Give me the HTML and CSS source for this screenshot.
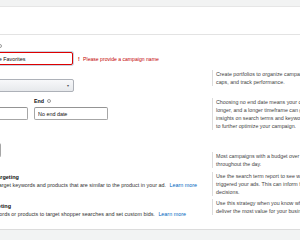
FILE: index.html
```html
<!DOCTYPE html>
<html lang="en">
<head>
    <meta charset="UTF-8">
    <title>Campaign settings</title>
    <link rel="stylesheet" href="styles.css">
</head>
<body>
    <div class="page">
        <div class="card">
            <div class="card-head">
                <h2>Settings</h2>
            </div>

            <div class="form">
                <!-- campaign name -->
                <div class="row row-name">
                    <div class="field">
                        <label class="label">Campaign name <span class="info"></span></label>
                        <div class="inline">
                            <input class="input input-error" type="text" value="Campaign - Home Favorites">
                            <span class="error"><b>!</b> Please provide a campaign name</span>
                        </div>
                    </div>
                </div>

                <!-- portfolio -->
                <div class="row row-portfolio">
                    <div class="field">
                        <label class="label">Portfolio <span class="info"></span></label>
                        <div class="select">No portfolio <span class="caret">&#9662;</span></div>
                    </div>
                    <div class="help">
                        Create portfolios to organize campaigns, set budget<br>
                        caps, and track performance.
                    </div>
                </div>

                <!-- dates -->
                <div class="row row-dates">
                    <div class="field dates">
                        <div class="date">
                            <label class="label">Start <span class="info"></span></label>
                            <input class="input input-date" type="text" value="Jun 4, 2024">
                        </div>
                        <div class="date">
                            <label class="label">End <span class="info"></span></label>
                            <input class="input input-date" type="text" value="No end date">
                        </div>
                    </div>
                    <div class="help">
                        Choosing no end date means your campaign can run<br>
                        longer, and a longer timeframe can give you more<br>
                        insights on search terms and keyword performance<br>
                        to further optimize your campaign.
                    </div>
                </div>

                <!-- budget -->
                <div class="row row-budget">
                    <div class="field">
                        <label class="label">Daily budget <span class="info"></span></label>
                        <input class="input input-budget" type="text" value="$">
                    </div>
                    <div class="help">
                        Most campaigns with a budget over $10 run<br>
                        throughout the day.
                    </div>
                </div>

                <!-- targeting -->
                <div class="row row-auto">
                    <div class="option">
                        <span class="radio"></span>
                        <div>
                            <div class="option-title">Automatic targeting</div>
                            <div class="option-text">Amazon will target keywords and products that are similar to the product in your ad. <a href="#">Learn more</a></div>
                        </div>
                    </div>
                    <div class="help">
                        Use the search term report to see which search terms<br>
                        triggered your ads. This can inform future bidding<br>
                        decisions.
                    </div>
                </div>

                <div class="row row-manual">
                    <div class="option">
                        <span class="radio"></span>
                        <div>
                            <div class="option-title">Manual targeting</div>
                            <div class="option-text">Choose keywords or products to target shopper searches and set custom bids. <a href="#">Learn more</a></div>
                        </div>
                    </div>
                    <div class="help">
                        Use this strategy when you know which keywords<br>
                        deliver the most value for your business.
                    </div>
                </div>
            </div>
        </div>
    </div>
</body>
</html>
```

FILE: styles.css
```css
* {
    margin: 0;
    padding: 0;
    box-sizing: border-box;
}

body {
    font-family: 'Liberation Sans', Arial, sans-serif;
    font-size: 5.3px;
    line-height: 8px;
    color: #333;
    background: #f2f3f3;
    overflow: hidden;
}

.page {
    width: 300px;
    height: 240px;
    padding-top: 6px;
    overflow: hidden;
}

.card {
    background: #fff;
    height: 224px;
    border-top: 1px solid #e6e6e6;
    border-bottom: 1px solid #dcdcdc;
}

.card-head {
    height: 28px;
    border-bottom: 1px solid #e3e3e3;
}

.card-head h2 {
    display: none;
}

.form {
    margin-left: -46px;
}

.row {
    display: grid;
    grid-template-columns: 258px 400px;
    align-items: start;
}

.row-name { height: 33px; padding-top: 7px; }
.row-portfolio { height: 28px; }
.row-dates { height: 37px; }
.row-budget { height: 37px; }
.row-auto { height: 28px; }
.row-manual { height: 24px; }

.label {
    display: flex;
    align-items: center;
    gap: 3px;
    height: 8px;
    font-weight: bold;
    color: #111;
    white-space: nowrap;
}

.info {
    display: inline-block;
    width: 4px;
    height: 4px;
    border: 0.6px solid #9a9a9a;
    border-radius: 50%;
}

.row-name .label { gap: 3px; }

.inline {
    display: flex;
    align-items: center;
    gap: 5px;
    margin-top: 2px;
}

.input {
    font-family: inherit;
    font-size: 5.4px;
    color: #111;
    height: 13px;
    padding: 0 3px;
    border: 1px solid #a6a6a6;
    border-top-color: #949494;
    border-radius: 2px;
    background: #fff;
    outline: none;
}

.input-error {
    width: 119px;
    border-color: #d00;
    box-shadow: 0 0 0 1px #c8d3e0;
}

.error {
    font-size: 5.1px;
    color: #c40000;
    white-space: nowrap;
}

.error b {
    margin-right: 2px;
}

.row-portfolio .field { padding-top: 2px; }

.select {
    margin-top: 1px;
    width: 120px;
    height: 13px;
    position: relative;
    padding: 0 3px;
    line-height: 11px;
    color: #111;
    border: 1px solid #adb1b8;
    border-radius: 2px;
    background: linear-gradient(#f7f8fa, #e7e9ec);
}

.caret {
    position: absolute;
    right: 4px;
    top: 0;
    font-size: 4px;
    color: #555;
}

.dates {
    display: flex;
    gap: 6px;
    padding-top: 1px;
}

.date .input {
    margin-top: 2px;
}

.input-date {
    width: 74px;
}

.row-budget .field { padding-top: 2px; }

.input-budget {
    width: 47px;
    height: 14px;
}

.option {
    display: flex;
    gap: 3px;
}

.radio {
    width: 10px;
    height: 10px;
    flex-shrink: 0;
    border: 1px solid #a6a6a6;
    border-radius: 50%;
}

.row-auto .option { padding-top: 3px; }
.row-manual .option { padding-top: 4px; }

.option-title {
    font-size: 5.5px;
    font-weight: bold;
    color: #111;
    white-space: nowrap;
}

.option-text {
    font-size: 5.4px;
    color: #333;
    white-space: nowrap;
}

.option-text a {
    color: #0066c0;
    text-decoration: none;
    margin-left: 2px;
}

.help {
    border-left: 1px solid #dcdcdc;
    padding-left: 3px;
    color: #444;
    white-space: nowrap;
}

.row-portfolio .help { margin-top: 2px; }
.row-dates .help { margin-top: 2px; }
.row-budget .help { margin-top: 19px; }
.row-auto .help { margin-top: 2px; }
.row-manual .help { margin-top: 1px; }
```
